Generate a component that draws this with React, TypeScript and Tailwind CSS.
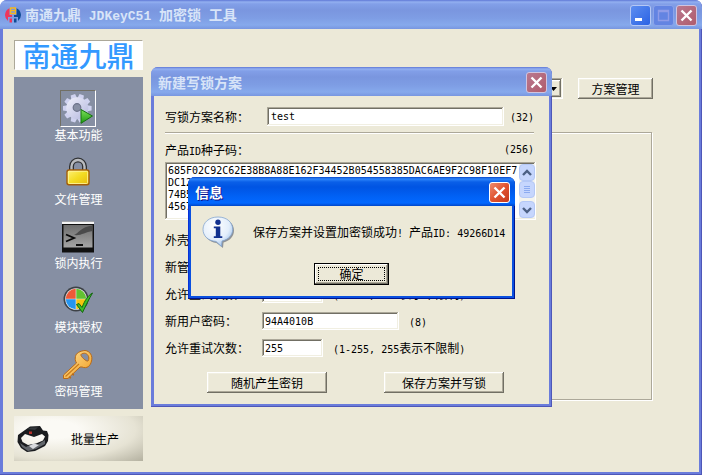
import type { ReactNode } from "react";
import clsx from "clsx";

const raised =
  "bg-[#ece9d8] shadow-[inset_-1px_-1px_#716f64,inset_1px_1px_#ffffff,inset_-2px_-2px_#aca899,inset_2px_2px_#f1efe2]";
const sunken =
  "bg-white shadow-[inset_-1px_-1px_#ffffff,inset_1px_1px_#aca899,inset_-2px_-2px_#f1efe2,inset_2px_2px_#716f64]";

const seedLines = [
  "685F02C92C62E38B8A88E162F34452B054558385DAC6AE9F2C98F10EF7",
  "DC12A94B07E35D618F2C40B7795AD3E816C0F4928BD16E70A35C49F81",
  "74B5E0C8136D9AF2475BC80E61D39F7A24085CE6B193D7F04A62E85C1",
  "4567C2A0B81D",
];

const navItems = [
  { label: "基本功能", icon: <GearIcon />, active: true },
  { label: "文件管理", icon: <LockIcon /> },
  { label: "锁内执行", icon: <TerminalIcon /> },
  { label: "模块授权", icon: <ModuleIcon /> },
  { label: "密码管理", icon: <KeyIcon /> },
];

const passwordFields = [
  { id: "shell", label: "外壳密码：", value: "", width: "w-[137px]" },
  { id: "admin", label: "新管理密码：", value: "", width: "w-[137px]" },
  { id: "admin-retry", label: "允许重试次数：", value: "255", width: "w-[61px]", note: <RetryNote /> },
  { id: "user", label: "新用户密码：", value: "94A4010B", width: "w-[137px]", note: <Latin>(8)</Latin> },
  { id: "user-retry", label: "允许重试次数：", value: "255", width: "w-[61px]", note: <RetryNote /> },
];

function Latin({ children }: { children: ReactNode }) {
  return (
    <span className="font-['DejaVu_Sans_Mono',monospace] text-[10px] whitespace-pre">{children}</span>
  );
}

function RetryNote() {
  return (
    <>
      <Latin>(1-255, 255</Latin>表示不限制<Latin>)</Latin>
    </>
  );
}

function GearIcon() {
  return (
    <svg viewBox="0 0 32 32" className="size-8">
      <defs>
        <linearGradient id="gear" x1="0" y1="0" x2="1" y2="1">
          <stop offset="0" stopColor="#f0f1fb" />
          <stop offset="1" stopColor="#b4b7de" />
        </linearGradient>
        <linearGradient id="play" x1="0" y1="0" x2="0" y2="1">
          <stop offset="0" stopColor="#7be05a" />
          <stop offset="1" stopColor="#1f9a12" />
        </linearGradient>
      </defs>
      <g fill="#cfd2ef">
        {[0, 36, 72, 108, 144, 180, 216, 252, 288, 324].map((a) => (
          <path key={a} d="M12 7 L13 1 H17.6 L18.6 7 Z" transform={`rotate(${a + 18} 15.3 15.3)`} />
        ))}
      </g>
      <circle cx="15.3" cy="15.3" r="11" fill="url(#gear)" />
      <circle cx="15" cy="14.5" r="3.8" fill="#8890a4" stroke="#6c7289" strokeWidth="1.2" />
      <path d="M19 16.5 L30.5 23 L19 30.3 Z" fill="url(#play)" stroke="#15720f" />
    </svg>
  );
}

function LockIcon() {
  return (
    <svg viewBox="0 0 32 32" className="size-8">
      <defs>
        <linearGradient id="lock" x1="0" y1="0" x2="1" y2="1">
          <stop offset="0" stopColor="#fff27a" />
          <stop offset="0.5" stopColor="#f3dc22" />
          <stop offset="1" stopColor="#e9b90c" />
        </linearGradient>
      </defs>
      <path d="M9.5 14 V9.5 a6.5 6.5 0 0 1 13 0 V14" fill="none" stroke="#303234" strokeWidth="5" />
      <path d="M9.5 14 V9.5 a6.5 6.5 0 0 1 13 0 V14" fill="none" stroke="#b9bbbf" strokeWidth="2.4" />
      <rect x="5" y="13" width="22" height="14.8" rx="2" fill="url(#lock)" stroke="#a35c08" strokeWidth="1.4" />
      <rect x="6.4" y="14.3" width="19.2" height="12.2" rx="1" fill="none" stroke="#fff6a4" strokeWidth="0.8" />
    </svg>
  );
}

function TerminalIcon() {
  return (
    <svg viewBox="0 0 32 32" className="size-8">
      <defs>
        <linearGradient id="term" x1="0" y1="0" x2="0" y2="1">
          <stop offset="0" stopColor="#6d6d6d" />
          <stop offset="1" stopColor="#a5a5a5" />
        </linearGradient>
      </defs>
      <rect y="0.5" width="32" height="31" fill="#101010" />
      <rect y="0.5" width="32" height="2.5" fill="#f5f5f5" />
      <rect x="1.5" y="4" width="29" height="22.5" fill="url(#term)" />
      <path d="M12 14 C16 13 19 5.5 30.5 4.5 V10 C23 11 19 15 12 14 Z" fill="#4a4a4a" />
      <path d="M4 13.5 L12 17 L4 20.5" fill="none" stroke="#080808" strokeWidth="1.9" />
      <path d="M14 24 H21" stroke="#080808" strokeWidth="1.9" />
    </svg>
  );
}

function ModuleIcon() {
  return (
    <svg viewBox="0 0 32 32" className="size-8">
      <circle cx="14" cy="14" r="12.5" fill="#3d4146" />
      <circle cx="14" cy="14" r="10.8" fill="#e8ecef" />
      <path d="M13.7 13.7 V3.8 A10.2 10.2 0 0 0 3.8 13.7 Z" fill="#ee5a38" />
      <path d="M14.3 13.7 V3.8 A10.2 10.2 0 0 1 24.2 13.7 Z" fill="#62c131" />
      <path d="M13.7 14.3 V24.2 A10.2 10.2 0 0 1 3.8 14.3 Z" fill="#2695ef" />
      <path d="M14.3 14.3 V24.2 A10.2 10.2 0 0 0 24.2 14.3 Z" fill="#f6c40f" />
      <path
        d="M14.5 19.5 L17 18.5 L20 22.5 C23 15 26 10.5 30.5 8 C27 14 24 20 20.5 27.5 Z"
        fill="#3dbd28"
        stroke="#14660f"
        strokeWidth="1"
      />
    </svg>
  );
}

function KeyIcon() {
  return (
    <svg viewBox="0 0 32 32" className="size-8">
      <defs>
        <linearGradient id="key" x1="0" y1="0" x2="1" y2="1">
          <stop offset="0" stopColor="#ffe39a" />
          <stop offset="1" stopColor="#f09a1d" />
        </linearGradient>
      </defs>
      <g fill="url(#key)" stroke="#b96a17" strokeWidth="1">
        <path
          fillRule="evenodd"
          d="M13.5 7.5 C14 4 18 2 23 1.5 C28 2 31 7 29.5 12 C28.5 17 25 20 20 18 L18 18 L6 29.5 L1.5 29.5 L1.5 26 L14.5 14 C13 11.5 13 9.5 13.5 7.5 Z M19 5.5 C18 7 24.5 13 26 12 C28.5 8 25 4 22.3 4.2 C20.5 4.4 19.5 4.8 19 5.5 Z"
        />
      </g>
      <path d="M3.5 27.5 L17 15" stroke="#c87a1a" strokeWidth="1.1" />
      <path d="M7 28 l2 1 M10 25 l2 1" stroke="#b96a17" strokeWidth="1.4" />
    </svg>
  );
}

function BandIcon() {
  return (
    <svg viewBox="0 0 32 28" className="h-7 w-8">
      <path
        d="M8 5 L13 1.5 L23 1 L26 5.5 L30 6 L31.5 10 L31 16 L28 21 L18 26 L10 27 L4 23 L0.5 17 L1 10 Z M8 9 L4 13 L5.5 17 L11 20 L19 18.5 L26 15.5 L28 11.5 L25 9 L17 12 Z"
        fill="#1a1c1f"
        fillRule="evenodd"
      />
      <path d="M3 18 L9 22 L15 19 L20 20 L28 15 L28 19 L19 24 L11 26 L5 22 Z" fill="#62666b" />
      <path d="M12 21 L17 18.5 L22 20 L16 24 Z" fill="#d8dadd" />
      <path d="M10 4 L14 2.5 L21 2.3 L18 5 Z" fill="#35383c" />
      <rect x="12" y="6.5" width="3" height="2.5" fill="#b5302c" />
    </svg>
  );
}

function AppIcon() {
  return (
    <svg viewBox="0 0 16 16" className="size-4">
      <path d="M5 1 A7.5 7.5 0 0 0 3 14 V10 H7 V8 H4.5 V1.5 Z" fill="#f0365c" />
      <path d="M4.5 11.5 H7 V15.5 H4.5 Z" fill="#f0365c" />
      <path d="M11 1 A7.5 7.5 0 0 1 13 14 V10 H9 V8 H11.5 V1.5 Z" fill="#0f4a94" />
      <path d="M9 11.5 H11.5 V15.5 H9 Z" fill="#0f4a94" />
      <path d="M5.5 1 H10.5 V6.5 H5.5 Z M5.5 3.7 H10.5" fill="none" stroke="#f5b81e" strokeWidth="1.3" />
    </svg>
  );
}

function InfoIcon() {
  return (
    <svg viewBox="0 0 33 33" className="size-[33px] shrink-0">
      <defs>
        <radialGradient id="info" cx="0.4" cy="0.3" r="0.8">
          <stop offset="0" stopColor="#ffffff" />
          <stop offset="0.6" stopColor="#e3eefb" />
          <stop offset="1" stopColor="#8db4e4" />
        </radialGradient>
      </defs>
      <path
        d="M17 2 C26 2 32 7.5 32 14.5 C32 20.5 27.5 25 21.5 26.5 L21 32 L14.5 27 C7 26 2 21 2 14.5 C2 7.5 8.5 2 17 2 Z"
        fill="#8f9296"
      />
      <path
        d="M16 1 C25 1 30.7 6.5 30.7 13.3 C30.7 19 26.5 23.6 20 25 L19.5 30.5 L14 25.4 C6 24.8 1 20 1 13.3 C1 6.5 7 1 16 1 Z"
        fill="url(#info)"
        stroke="#83a5cf"
        strokeWidth="0.8"
      />
      <circle cx="16" cy="6.3" r="2.7" fill="#12318f" />
      <path d="M11.8 10.5 H18.3 V20.3 H20.3 V22 H11.8 V20.3 H13.8 V12.2 H11.8 Z" fill="#12318f" />
    </svg>
  );
}

function CaptionButton({ kind, active }: { kind: "min" | "max" | "close"; active?: boolean }) {
  return (
    <button
      aria-label={kind}
      disabled={kind === "max"}
      className={clsx(
        "flex size-[21px] items-center justify-center rounded-[3px] border",
        kind === "min" && "border-[#b5c8f5] bg-linear-to-br from-[#5d8df0] to-[#2b62e4]",
        kind === "max" && "border-[#8ba4ea] bg-[#6384e2]",
        kind === "close" && !active && "border-[#d0c4df] bg-linear-to-br from-[#b9788f] to-[#b05c6c]",
        kind === "close" && active && "border-white bg-linear-to-br from-[#ee8a6c] via-[#e0532f] to-[#c6381a]",
      )}
    >
      <svg viewBox="0 0 19 19" className="size-[19px]" fill="none" stroke="#ffffff">
        {kind === "min" && <path d="M4 13.5 H11" strokeWidth="3" />}
        {kind === "max" && <path d="M4.5 4.5 H14.5 V14.5 H4.5 Z M4 5.5 H15" stroke="#8f9ce8" strokeWidth="1.4" />}
        {kind === "close" && <path d="M4.5 4.5 L14.5 14.5 M14.5 4.5 L4.5 14.5" strokeWidth="2.4" />}
      </svg>
    </button>
  );
}

function TitleBar({
  children,
  icon,
  active,
  buttons,
}: {
  children: ReactNode;
  icon?: ReactNode;
  active?: boolean;
  buttons: ReactNode;
}) {
  return (
    <header
      className={clsx(
        "flex h-[29px] shrink-0 items-center rounded-t-[7px] pt-px pr-[5px]",
        icon ? "pl-[5px]" : "pl-[7px]",
        active
          ? "bg-[linear-gradient(#0a47c8,#2e86fb_2px,#0a5fe8_5px,#0054e3_10px,#0162f6_20px,#0268ff_26px,#0146c8)] text-white [text-shadow:1px_1px_#0f1089]"
          : "bg-[linear-gradient(#5f78d6,#93b0f0_2px,#829fe8_4px,#7a96df_10px,#7e9de4_18px,#86a9ec_25px,#7896e0)] text-[#d8e4f8]",
      )}
    >
      {icon && <span className="mr-1">{icon}</span>}
      <h2 className="flex-1 text-sm leading-5 font-bold whitespace-pre">{children}</h2>
      <div className="flex gap-0.5">{buttons}</div>
    </header>
  );
}

function ScrollButton({ d, label }: { d: string; label: string }) {
  return (
    <button
      aria-label={label}
      className="flex h-[17px] w-4 items-center justify-center rounded-sm border border-[#b4c8f6] bg-[#c6d6fd]"
    >
      <svg viewBox="0 0 10 10" className="size-2.5" fill="none" stroke="#4d6185" strokeWidth="2.4">
        <path d={d} />
      </svg>
    </button>
  );
}

function PushButton({ children, className }: { children: ReactNode; className: string }) {
  return <button className={clsx("h-[21px] text-xs leading-[18px]", raised, className)}>{children}</button>;
}

function Sidebar() {
  return (
    <aside className="flex w-[129px] shrink-0 flex-col gap-[7px]">
      <div className="flex h-[30px] items-center justify-center border border-white border-t-[#aca899] border-l-[#aca899] bg-white text-[28px] leading-[28px] font-medium text-[#3399ff]">
        南通九鼎
      </div>
      <nav className="flex flex-1 flex-col items-center gap-[11px] bg-[#868fa3] pt-[13px]">
        {navItems.map((item) => (
          <a key={item.label} href="#" className="flex flex-col items-center text-white">
            <span
              className={clsx(
                "flex h-[37px] w-9 items-center justify-center border",
                item.active
                  ? "border-white border-t-[#716f64] border-l-[#716f64]"
                  : "border-transparent",
              )}
            >
              {item.icon}
            </span>
            <span className="text-xs leading-4">{item.label}</span>
          </a>
        ))}
      </nav>
      <button className="flex h-[45px] items-center bg-[radial-gradient(ellipse_at_30%_30%,#fbfaf5_20%,#e6e3d4_65%,#b4b1a0)] pl-[3px] text-xs">
        <BandIcon />
        <span className="ml-[22px]">批量生产</span>
      </button>
    </aside>
  );
}

function SchemeDialog() {
  return (
    <section
      role="dialog"
      className="absolute top-[67px] left-[151px] w-[401px] rounded-t-[7px] bg-[#6a7cdb] shadow-[inset_-1px_-1px_#4e57b8]"
    >
      <TitleBar buttons={<CaptionButton kind="close" />}>新建写锁方案</TitleBar>
      <form className="mx-[3px] bg-[#ece9d8] px-[11px] pt-[11px] pb-[11px]">
        <div className="flex h-[19px] items-center">
          <label htmlFor="scheme" className="w-[102px]">写锁方案名称：</label>
          <input
            id="scheme"
            defaultValue="test"
            className={clsx("h-[19px] w-[237px] px-1 font-['DejaVu_Sans_Mono',monospace] text-[10px]", sunken)}
          />
          <span className="ml-1.5"><Latin>(32)</Latin></span>
        </div>
        <hr className="mt-1.5 mr-1 h-0.5 border-t border-b border-t-[#aca899] border-b-white" />
        <div className="mt-1.5 mr-1 mb-0.5 flex h-5 items-center justify-between">
          <label htmlFor="seed">产品<Latin>ID</Latin>种子码：</label>
          <Latin>(256)</Latin>
        </div>
        <div className={clsx("flex h-[58px] w-[371px] py-0.5 pr-px pl-0.5", sunken)}>
          <textarea
            id="seed"
            defaultValue={seedLines.join("\n")}
            className="h-[54px] flex-1 resize-none overflow-hidden pt-px pl-px font-['DejaVu_Sans_Mono',monospace] text-[10px] leading-3 whitespace-pre"
          />
          <div className="flex w-4 flex-col bg-[#f4f4ee]">
            <ScrollButton label="up" d="M1 7 L5 3 L9 7" />
            <button
              aria-label="thumb"
              className="flex h-[17px] w-4 flex-col items-center justify-center gap-px rounded-sm border border-[#b4c8f6] bg-[#c6d6fd]"
            >
              {[0, 1, 2, 3].map((n) => (
                <span key={n} className="h-px w-1.5 bg-[#8cabf0]" />
              ))}
            </button>
            <div className="flex-1" />
            <ScrollButton label="down" d="M1 3 L5 7 L9 3" />
          </div>
        </div>
        <div className="mt-[11px] flex flex-col gap-[9px]">
          {passwordFields.map((field) => (
            <div key={field.id} className="flex h-[18px] items-center">
              <label htmlFor={field.id} className="w-[97px]">{field.label}</label>
              <input
                id={field.id}
                defaultValue={field.value}
                className={clsx(
                  "h-[18px] px-[3px] font-['DejaVu_Sans_Mono',monospace] text-[10px]",
                  sunken,
                  field.width,
                )}
              />
              {field.note && <span className="ml-2.5">{field.note}</span>}
            </div>
          ))}
        </div>
        <div className="mt-[15px] flex justify-between pr-[34px] pl-[42px]">
          <PushButton className="w-[120px]">随机产生密钥</PushButton>
          <PushButton className="w-[120px]">保存方案并写锁</PushButton>
        </div>
      </form>
      <div className="h-[3px]" />
    </section>
  );
}

function MessageBox() {
  return (
    <section
      role="alertdialog"
      className="absolute top-[177px] left-[188px] w-[327px] rounded-t-[7px] bg-[#0a50e0] shadow-[inset_-1px_-1px_#00138c,inset_1px_0_#0831d9]"
    >
      <TitleBar active buttons={<CaptionButton kind="close" active />}>信息</TitleBar>
      <div className="mx-[3px] flex flex-col items-center bg-[#ece9d8] pt-2.5 pb-[11px]">
        <div className="flex w-full items-center gap-[18px] pl-[11px]">
          <InfoIcon />
          <p className="whitespace-nowrap">
            保存方案并设置加密锁成功<Latin>! </Latin>产品<Latin>ID: 49266D14</Latin>
          </p>
        </div>
        <button className="mt-3.5 h-[22px] w-[75px] border border-black bg-[#ece9d8] p-[3px] shadow-[inset_-1px_-1px_#716f64,inset_1px_1px_#ffffff,inset_-2px_-2px_#aca899]">
          <span className="block border border-dotted border-black text-xs leading-3">确定</span>
        </button>
      </div>
      <div className="h-[3px]" />
    </section>
  );
}

export default function App() {
  return (
    <div className="relative flex min-h-screen flex-col rounded-t-[7px] bg-[#6a7cdb] font-['Noto_Sans_CJK_SC',sans-serif] text-xs text-black shadow-[inset_-1px_-1px_#4e57b8]">
      <TitleBar
        icon={<AppIcon />}
        buttons={
          <>
            <CaptionButton kind="min" />
            <CaptionButton kind="max" />
            <CaptionButton kind="close" />
          </>
        }
      >
        南通九鼎
        <span className="font-['Liberation_Mono',monospace] text-[13px]"> JDKeyC51 </span>
        加密锁
        <span className="font-['Liberation_Mono',monospace] text-[13px]"> </span>
        工具
      </TitleBar>
      <div className="mx-[3px] mb-[3px] flex flex-1 bg-[#ece9d8] pt-[11px] pb-[11px] pl-[11px]">
        <Sidebar />
        <main className="flex-1 pt-[38px] pr-[46px] pl-2.5">
          <div className="flex items-center justify-end gap-[15px]">
            <div className="relative">
              <select
                aria-label="方案"
                className={clsx("h-[21px] w-[200px] appearance-none px-1 text-xs", sunken)}
              />
              <span
                className={clsx(
                  "pointer-events-none absolute top-0.5 right-0.5 flex h-[17px] w-4 items-center justify-center",
                  raised,
                )}
              >
                <svg viewBox="0 0 7 4" className="h-1 w-[7px]">
                  <path d="M0 0 H7 L3.5 4 Z" fill="#000000" />
                </svg>
              </span>
            </div>
            <PushButton className="w-[75px]">方案管理</PushButton>
          </div>
          <fieldset className="mt-[33px] mr-px h-[268px] border border-[#aca899] shadow-[1px_1px_#ffffff,inset_1px_1px_#ffffff]" />
        </main>
      </div>
      <SchemeDialog />
      <MessageBox />
    </div>
  );
}
